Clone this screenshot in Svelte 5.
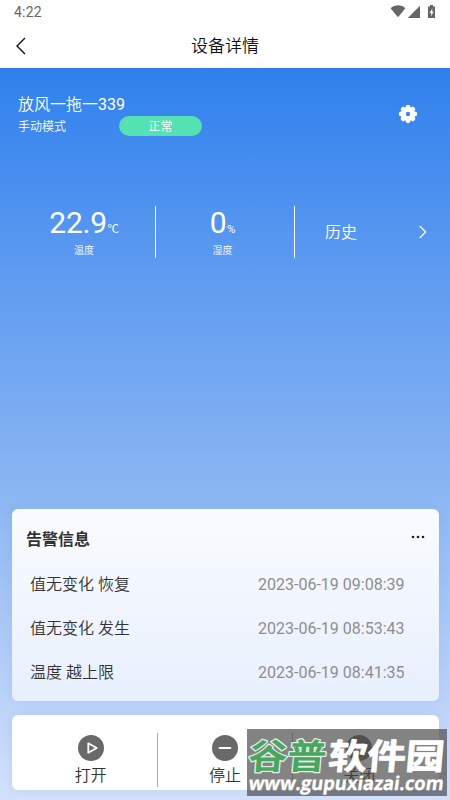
<script lang="ts">
  const readings = [
    { value: '22.9', unit: '℃', label: '温度' },
    { value: '0', unit: '%', label: '湿度' }
  ];

  const alarms = [
    { text: '值无变化 恢复', time: '2023-06-19 09:08:39' },
    { text: '值无变化 发生', time: '2023-06-19 08:53:43' },
    { text: '温度 越上限', time: '2023-06-19 08:41:35' }
  ];

  const actions = [
    { id: 'open', label: '打开' },
    { id: 'stop', label: '停止' },
    { id: 'close', label: '关闭' }
  ];

  const teeth = [0, 45, 90, 135, 180, 225, 270, 315];
</script>

<div class="screen">
  <div class="status-bar">
    <span class="clock">4:22</span>
    <svg class="status-icons" width="48" height="16" viewBox="0 0 48 16">
      <path d="M0.6 4.2C5 0.4 11.2 0.4 15.4 4.2L8 13.2Z" />
      <path d="M18 14V13.8L30 1.8V14Z" />
      <path d="M40 1h3v1.5h2v11.5h-7V2.5h2Z" />
      <path class="bolt" d="M42.4 4.3L39.7 9h1.5v3.4L43.6 7.6h-1.5Z" />
    </svg>
  </div>

  <header class="nav">
    <svg class="back" width="12" height="18" viewBox="0 0 12 18">
      <path d="M11 1L3 9l8 8" />
    </svg>
    <h1>设备详情</h1>
  </header>

  <main>
    <section class="device">
      <div class="info">
        <div class="name">放风一拖一<span>339</span></div>
        <div class="mode">
          <span>手动模式</span>
          <span class="badge">正常</span>
        </div>
      </div>
      <svg class="gear" width="20" height="20" viewBox="-10 -10 20 20">
        {#each teeth as angle}
          <rect x="-2.2" y="-9" width="4.4" height="6" rx="1.4" transform="rotate({angle})" />
        {/each}
        <circle class="ring" r="4.7" />
      </svg>
    </section>

    <section class="readings">
      {#each readings as r}
        <div class="reading">
          <div class="figure">{r.value}<small>{r.unit}</small></div>
          <div class="caption">{r.label}</div>
        </div>
      {/each}
      <div class="history">
        <span>历史</span>
        <svg width="10" height="14" viewBox="0 0 10 14">
          <path d="M1.7 1l6 6l-6 6" />
        </svg>
      </div>
    </section>

    <section class="card alarms">
      <div class="card-head">
        <h2>告警信息</h2>
        <svg width="14" height="4" viewBox="0 0 14 4">
          <circle cx="2" cy="2" r="1.3" />
          <circle cx="7" cy="2" r="1.3" />
          <circle cx="12" cy="2" r="1.3" />
        </svg>
      </div>
      {#each alarms as alarm}
        <div class="alarm">
          <span>{alarm.text}</span>
          <time>{alarm.time}</time>
        </div>
      {/each}
    </section>

    <section class="card actions">
      {#each actions as action}
        <div class="action">
          <svg width="26" height="26" viewBox="0 0 26 26">
            <circle cx="13" cy="13" r="13" />
            {#if action.id === 'open'}
              <path d="M10.3 8.2v9.6l8.4-4.8Z" />
            {:else if action.id === 'stop'}
              <path d="M7.5 13h11" />
            {:else}
              <path d="M9 9l8 8M17 9l-8 8" />
            {/if}
          </svg>
          <span>{action.label}</span>
        </div>
      {/each}
    </section>
  </main>

  <div class="watermark">
    <svg width="200" height="67" viewBox="0 0 200 67">
      <g class="brand" transform="skewX(-5)">
        <text class="green" x="4" y="39.5" textLength="78" lengthAdjust="spacingAndGlyphs">谷普</text>
        <text class="white" x="84" y="39.5" textLength="116" lengthAdjust="spacingAndGlyphs">软件园</text>
      </g>
      <g transform="skewX(-8)">
        <text class="url" x="9.5" y="61" textLength="195" lengthAdjust="spacingAndGlyphs">www.gupuxiazai.com</text>
      </g>
    </svg>
  </div>
</div>

<style>
  :global(body) {
    margin: 0;
    overflow: hidden;
  }

  .screen {
    position: relative;
    display: flex;
    flex-direction: column;
    width: 450px;
    height: 800px;
    overflow: hidden;
    background: #fff;
    color: #333;
    font-family: Roboto, 'Noto Sans CJK SC', sans-serif;
    font-size: 16px;
  }

  svg {
    display: block;
    flex: none;
  }

  h1,
  h2 {
    margin: 0;
  }

  .status-bar {
    display: flex;
    justify-content: space-between;
    align-items: center;
    height: 24px;
    padding: 0 12px 0 14px;
  }

  .clock {
    color: #666;
    font-size: 14px;
    letter-spacing: 0.2px;
  }

  .status-icons {
    fill: #666;
    margin-bottom: 1px;
  }

  .bolt {
    fill: #fff;
  }

  .nav {
    display: grid;
    grid-template-columns: 40px 1fr 40px;
    align-items: center;
    height: 44px;
  }

  .nav h1 {
    text-align: center;
    color: #111;
    font-size: 17px;
    font-weight: 350;
    line-height: 24px;
  }

  .back {
    margin-left: 14px;
    fill: none;
    stroke: #111;
    stroke-width: 1.4;
  }

  main {
    display: flex;
    flex-direction: column;
    height: 732px;
    color: #fff;
    background: linear-gradient(#2f80ed, #5e9bf1 28%, #8db7f3 59%, #d3e0fb);
  }

  .device {
    display: flex;
    justify-content: space-between;
    height: 138px;
    box-sizing: border-box;
    padding: 25px 32px 0 18px;
  }

  .name {
    font-weight: 350;
    line-height: 23px;
  }

  .name span {
    font-weight: 400;
  }

  .mode {
    display: flex;
    align-items: center;
    font-size: 12px;
    font-weight: 350;
    line-height: 20px;
  }

  .mode span {
    height: 19px;
    padding-top: 1px;
  }

  .badge {
    width: 83px;
    margin-left: 53px;
    border-radius: 10px;
    background: #55e1b1;
    text-align: center;
  }

  .gear {
    margin-top: 11px;
    fill: #fff;
  }

  .ring {
    fill: none;
    stroke: #fff;
    stroke-width: 5;
  }

  .readings {
    display: flex;
    height: 52px;
    padding-left: 12px;
  }

  .reading {
    width: 139px;
    padding-right: 5px;
    box-sizing: border-box;
    border-right: 1px solid #fff;
    text-align: center;
  }

  .reading:first-child {
    width: 144px;
    padding: 0 0 0 1px;
  }

  .figure {
    height: 34px;
    font-size: 30px;
    letter-spacing: -0.2px;
    line-height: 34px;
  }

  .figure small {
    margin-left: 0.5px;
    font-size: 11.5px;
  }

  .caption {
    padding-top: 1px;
    font-size: 10px;
    font-weight: 350;
    line-height: 20px;
  }

  .history {
    display: flex;
    flex: 1;
    align-items: center;
    justify-content: space-between;
    padding: 0 22px 0 30px;
    font-weight: 350;
  }

  .history span {
    margin-top: -2px;
  }

  .history path {
    fill: none;
    stroke: #fff;
    stroke-width: 1.2;
  }

  .card {
    width: 427px;
    box-sizing: border-box;
    margin-left: 12px;
    border-radius: 6px;
    box-shadow: 0 0 10px rgba(90, 130, 220, 0.12);
    color: #333;
  }

  .alarms {
    height: 192px;
    margin-top: 251px;
    padding: 9px 14px 0;
    background: linear-gradient(#f9fcff, #e8effd);
  }

  .card-head {
    display: flex;
    justify-content: space-between;
    height: 45px;
  }

  .card-head h2 {
    font-size: 16px;
    line-height: 44px;
  }

  .card-head svg {
    margin-top: 17px;
    fill: #222;
  }

  .alarm {
    display: flex;
    justify-content: space-between;
    padding: 0 20.5px 0 4px;
    font-weight: 350;
    line-height: 44px;
  }

  time {
    color: #8e8e8e;
    font-weight: 400;
  }

  .actions {
    display: flex;
    height: 75px;
    margin-top: 14px;
    padding: 18px 13px 0 11px;
    background: #fff;
  }

  .action {
    display: flex;
    flex: 1;
    flex-direction: column;
    align-items: center;
    height: 54px;
    padding-top: 2px;
    box-sizing: border-box;
    font-weight: 350;
    line-height: 29px;
  }

  .action:first-child {
    padding-left: 1px;
  }

  .action + .action {
    border-left: 1px solid #aaa;
  }

  .action circle {
    fill: #696969;
  }

  .action path {
    fill: none;
    stroke: #fff;
    stroke-width: 1.8;
    stroke-linejoin: round;
    stroke-linecap: round;
  }

  .watermark {
    position: absolute;
    right: 3px;
    bottom: 4px;
    background: rgba(70, 70, 70, 0.67);
  }

  .brand {
    font-family: 'Noto Sans CJK SC', sans-serif;
    font-size: 35px;
    font-weight: 700;
    paint-order: stroke;
    stroke-linejoin: round;
  }

  .green {
    fill: #4aa561;
    stroke: #e4efe6;
    stroke-width: 2.5;
  }

  .white {
    fill: #fff;
    stroke: #fff;
    stroke-width: 0.8;
  }

  .url {
    fill: #fff;
    stroke: #fff;
    stroke-width: 0.3;
    font-family: 'Open Sans', sans-serif;
    font-size: 19px;
    font-weight: 700;
  }
</style>
